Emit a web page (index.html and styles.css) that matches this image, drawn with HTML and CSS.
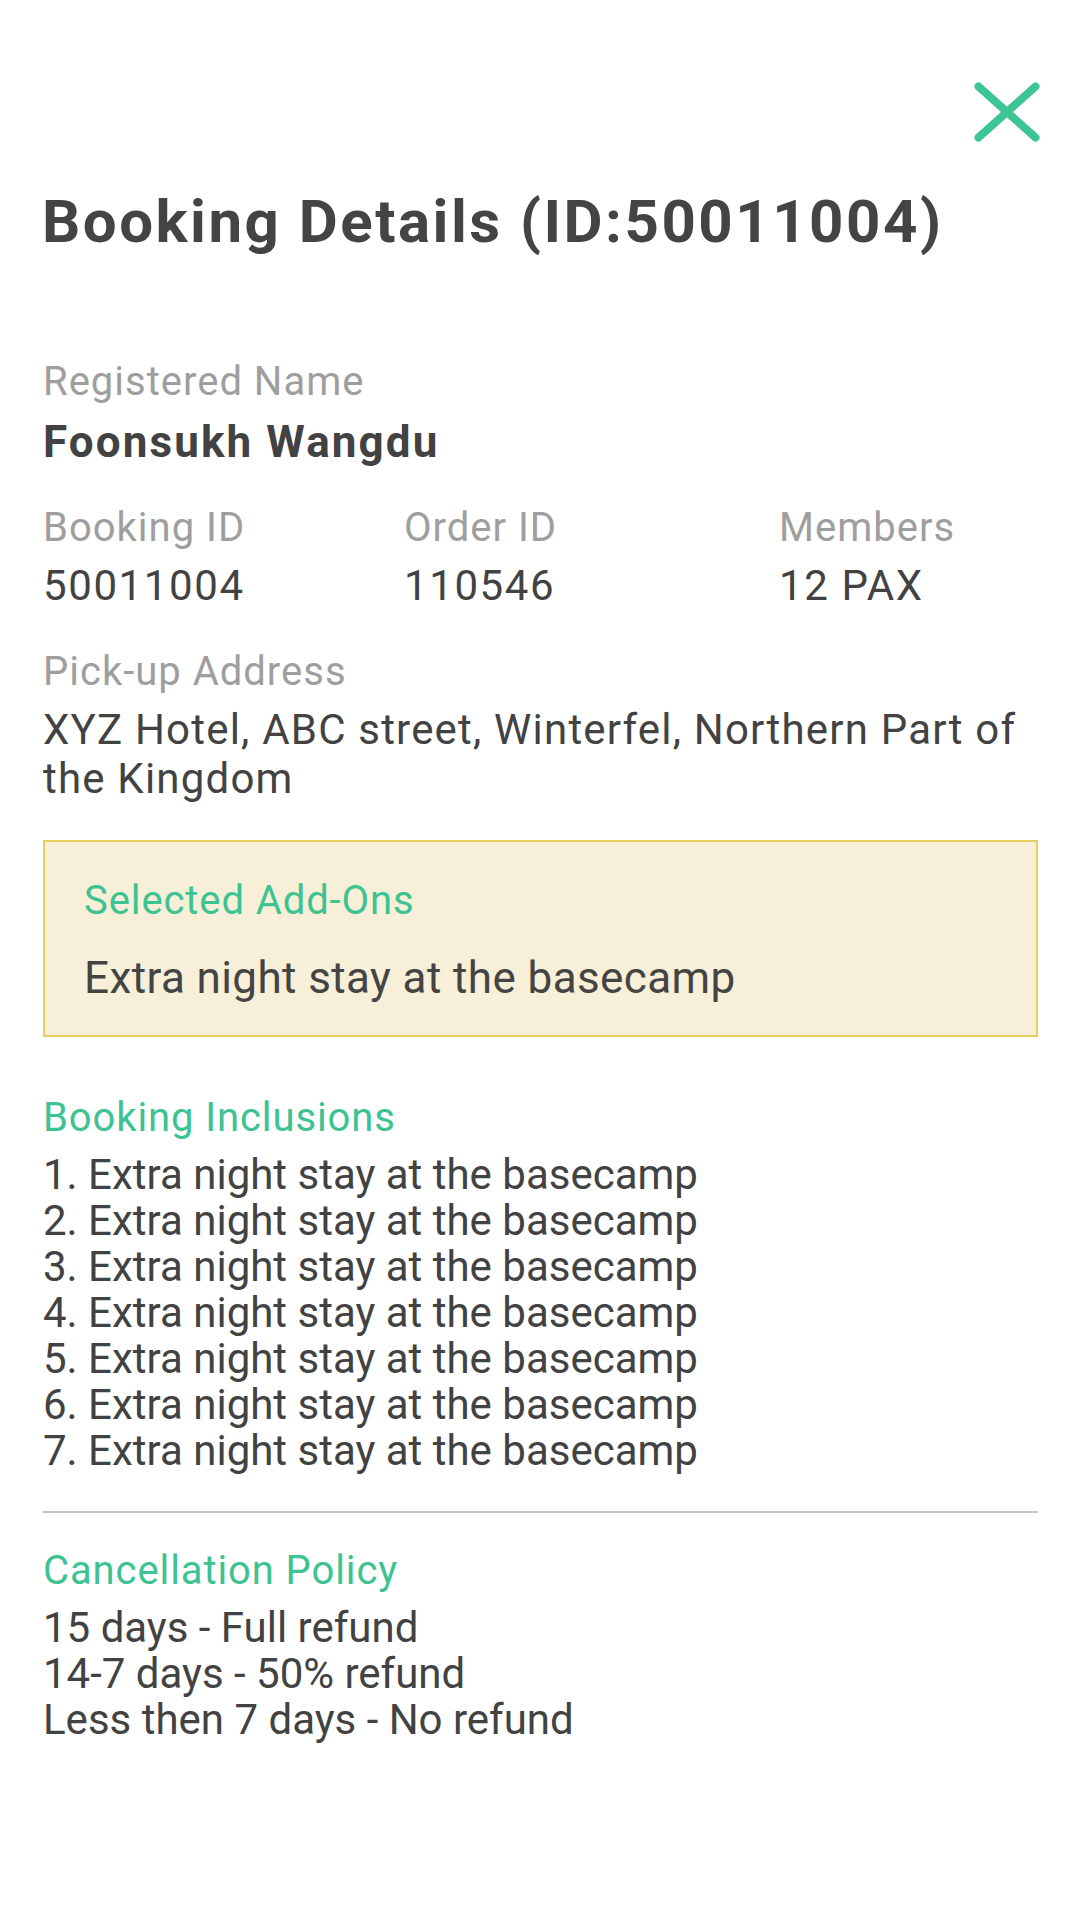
FILE: index.html
```html
<!DOCTYPE html>
<html lang="en">
<head>
	<meta charset="UTF-8">
	<meta name="viewport" content="width=device-width, initial-scale=1.0">
	<title>Booking Details</title>
	<link rel="stylesheet" href="styles.css">
</head>
<body>
	<div class="sheet">
		<div class="top-bar">
			<button class="close" aria-label="Close">
				<svg width="66" height="60" viewBox="0 0 66 60">
					<path d="M4.5 4.5 L61.5 55.5 M61.5 4.5 L4.5 55.5" stroke="#3dc594" stroke-width="8" stroke-linecap="round" fill="none"/>
				</svg>
			</button>
		</div>

		<h1 class="title">Booking Details (ID:50011004)</h1>

		<div class="field name-field">
			<div class="label">Registered Name</div>
			<div class="name">Foonsukh Wangdu</div>
		</div>

		<div class="ids">
			<div class="field">
				<div class="label">Booking ID</div>
				<div class="value">50011004</div>
			</div>
			<div class="field">
				<div class="label">Order ID</div>
				<div class="value">110546</div>
			</div>
			<div class="field">
				<div class="label">Members</div>
				<div class="value">12 PAX</div>
			</div>
		</div>

		<div class="field address-field">
			<div class="label">Pick-up Address</div>
			<div class="address">XYZ Hotel, ABC street, Winterfel, Northern Part of the Kingdom</div>
		</div>

		<div class="addons">
			<div class="heading">Selected Add-Ons</div>
			<div class="addon-text">Extra night stay at the basecamp</div>
		</div>

		<div class="section inclusions">
			<div class="heading">Booking Inclusions</div>
			<div class="lines">
				<div>1. Extra night stay at the basecamp</div>
				<div>2. Extra night stay at the basecamp</div>
				<div>3. Extra night stay at the basecamp</div>
				<div>4. Extra night stay at the basecamp</div>
				<div>5. Extra night stay at the basecamp</div>
				<div>6. Extra night stay at the basecamp</div>
				<div>7. Extra night stay at the basecamp</div>
			</div>
		</div>

		<div class="divider"></div>

		<div class="section policy">
			<div class="heading">Cancellation Policy</div>
			<div class="lines">
				<div>15 days - Full refund</div>
				<div>14-7 days - 50% refund</div>
				<div>Less then 7 days - No refund</div>
			</div>
		</div>
	</div>
</body>
</html>
```

FILE: styles.css
```css
body {
	margin: 0;
	background: #fff;
	font-family: Roboto, "Noto Sans", sans-serif;
	color: #444;
}

.sheet {
	padding: 0 42px 80px 43px;
}

.top-bar {
	display: flex;
	justify-content: flex-end;
	padding-top: 82px;
}

.close {
	border: none;
	background: none;
	padding: 0;
	margin-right: -2px;
	display: block;
	cursor: pointer;
}

.close svg {
	display: block;
}

.title {
	margin: 44px 0 0 -1px;
	font-size: 60px;
	line-height: 72px;
	font-weight: 700;
	letter-spacing: 2.5px;
	color: #444;
}

.label {
	font-size: 40px;
	line-height: 48px;
	letter-spacing: 1px;
	color: #9e9e9e;
}

.name-field {
	margin-top: 100px;
}

.name {
	margin-top: 10px;
	font-size: 44px;
	line-height: 52px;
	font-weight: 700;
	letter-spacing: 2.1px;
	color: #424242;
}

.ids {
	display: grid;
	grid-template-columns: 361px 375px 1fr;
	margin-top: 36px;
}

.value {
	margin-top: 9px;
	font-size: 42px;
	line-height: 50px;
	letter-spacing: 1.6px;
	color: #424242;
}

.address-field {
	margin-top: 37px;
}

.address {
	margin-top: 9px;
	font-size: 42px;
	line-height: 49px;
	letter-spacing: 1.2px;
	color: #424242;
}

.addons {
	margin-top: 37px;
	background: #f7efd8;
	border: 2px solid #e6cf5e;
	padding: 35px 40px 31px 39px;
}

.heading {
	font-size: 40px;
	line-height: 48px;
	letter-spacing: 0.9px;
	color: #3dc391;
}

.addon-text {
	margin-top: 27px;
	font-size: 44px;
	line-height: 52px;
	letter-spacing: 0.4px;
	color: #444;
}

.inclusions {
	margin-top: 57px;
}

.lines {
	margin-top: 10px;
	font-size: 42px;
	line-height: 46px;
	color: #424242;
}

.divider {
	margin-top: 37px;
	height: 2px;
	background: #c4c4c4;
}

.policy {
	margin-top: 34px;
}
```
